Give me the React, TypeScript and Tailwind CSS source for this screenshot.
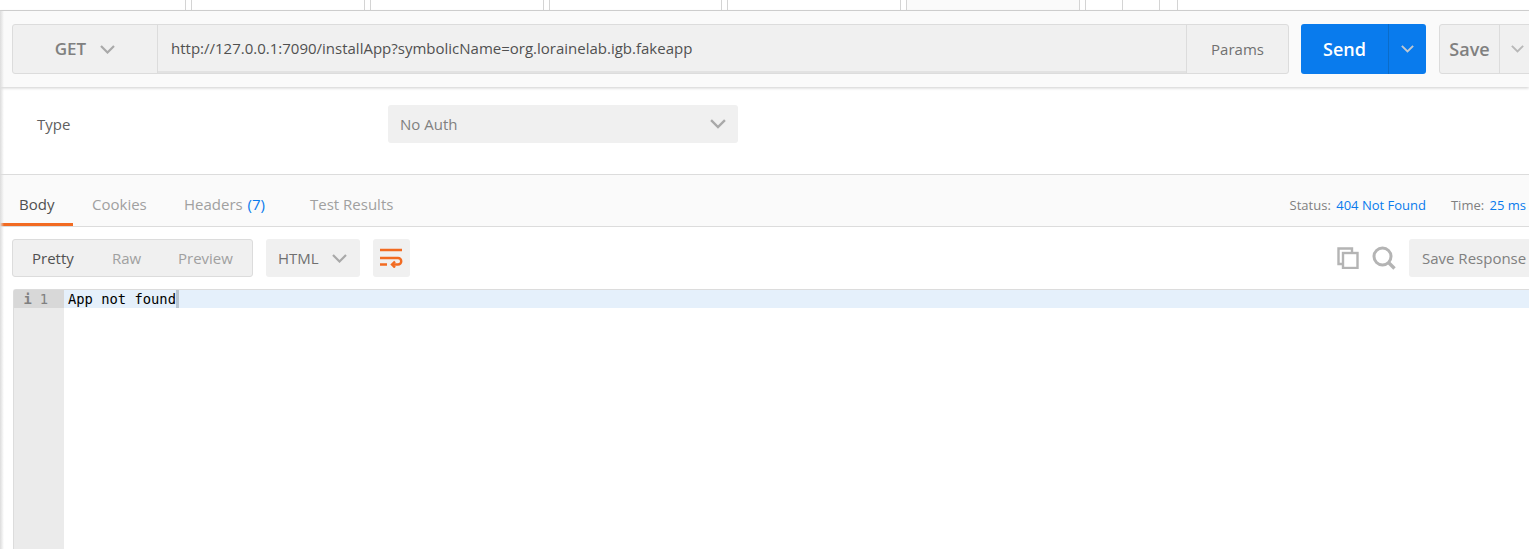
const tabWidths = ["w-[186px]", "w-[174px]", "w-[174px]", "w-[173px]", "w-[174px]"];

function Chevron({ className, width = 15 }: { className: string; width?: number }) {
  return (
    <svg width={width} height={width * 0.6} viewBox="0 0 15 9" fill="none" stroke="currentColor" strokeWidth="2.2" className={className}>
      <path d="M1 1l6.5 6.5L14 1" />
    </svg>
  );
}

function WrapIcon() {
  return (
    <svg width="23" height="20" viewBox="0 0 23 20" fill="none" stroke="#f26b22" strokeWidth="2.4" className="-ml-[1px]">
      <path d="M0 2h22M0 10h18a3.2 3.2 0 0 1 0 6.5H12M0 16.5h7" />
      <path d="M15 13.5l-3 3 3 3" />
    </svg>
  );
}

function CopyIcon() {
  return (
    <svg width="22" height="22" viewBox="0 0 22 22" fill="none" stroke="#b4b4b4" strokeWidth="2.4">
      <path d="M5 17H1.5V1.5H15V5" />
      <rect x="6" y="6" width="14.5" height="15" />
    </svg>
  );
}

function SearchIcon() {
  return (
    <svg width="24" height="24" viewBox="0 0 24 24" fill="none" stroke="#b4b4b4">
      <circle cx="10.5" cy="10.5" r="8.5" strokeWidth="3" />
      <path d="M16.5 16.5l6 6" strokeWidth="3.4" />
    </svg>
  );
}

export default function App() {
  return (
    <div className="relative h-[549px] w-[1529px] overflow-hidden bg-white font-['Open_Sans',sans-serif] text-[15px] text-[#505050]">
      <div className="flex h-[11px] gap-[5px] overflow-hidden border-b border-[#d4d4d4]">
        {tabWidths.map((w, i) => (
          <div key={i} className={`${w} border-r border-[#d4d4d4] ${i === 0 ? "" : "border-l"}`} />
        ))}
        <div className="w-[174px] border-x border-[#d4d4d4] bg-[#fafafa]" />
        <div className="flex w-[93px] border-x border-[#d4d4d4]">
          <div className="w-[37px] border-r border-[#d4d4d4]" />
          <div className="w-[37px] border-r border-[#d4d4d4]" />
        </div>
      </div>

      <div className="relative flex h-[76px] gap-[12px] overflow-hidden bg-[#fafafa] pl-[12px] pt-[13px] shadow-[0_1px_3px_rgba(0,0,0,0.2)]">
        <div className="flex h-[50px] w-[1277px] shrink-0 overflow-hidden rounded-[3px] border border-[#dcdcdc] bg-[#f0f0f0]">
          <div className="flex w-[145px] items-center justify-center gap-[14px] border-r border-[#dcdcdc] text-[17px] font-semibold text-[#808080]">
            GET <Chevron className="text-[#a9a9a9]" />
          </div>
          <div className="flex flex-1 items-center border-b-2 border-[#e2e2e2] pl-[13px] text-[#505050]">
            http://127.0.0.1:7090/installApp?symbolicName=org.lorainelab.igb.fakeapp
          </div>
          <div className="flex w-[102px] items-center justify-center border-l border-[#dcdcdc] text-[#707070]">Params</div>
        </div>
        <div className="flex h-[50px] w-[125px] shrink-0 overflow-hidden rounded-[3px] bg-[#097bed] text-white">
          <div className="flex w-[87px] items-center justify-center text-[18px] font-semibold">Send</div>
          <div className="flex flex-1 items-center justify-center border-l border-[#0a6cc9]">
            <Chevron width={13} className="text-[#c0c8d0]" />
          </div>
        </div>
        <div className="ml-[1px] flex h-[50px] w-[100px] shrink-0 rounded-[3px] border border-[#dcdcdc] bg-[#f0f0f0]">
          <div className="flex w-[60px] items-center justify-center border-r border-[#dcdcdc] text-[18px] font-semibold text-[#808080]">Save</div>
          <div className="flex items-center pl-[11px]">
            <Chevron width={13} className="text-[#b8b8b8]" />
          </div>
        </div>
      </div>

      <div className="flex h-[87px] items-start pl-[37px] pt-[18px]">
        <div className="w-[351px] pt-[8px] text-[#606060]">Type</div>
        <div className="flex h-[38px] w-[350px] items-center justify-between rounded-[3px] bg-[#f0f0f0] px-[12px] text-[#808080]">
          No Auth <Chevron width={16} className="text-[#a9a9a9]" />
        </div>
      </div>

      <div className="flex h-[53px] items-end justify-between border-y border-[#dcdcdc] bg-[#fafafa]">
        <div className="flex items-end text-[#a0a0a0]">
          <div className="h-[33px] w-[73px] border-b-[3px] border-[#f26b22] pl-[19px] text-[#505050]">Body</div>
          <div className="h-[33px] w-[92px] pl-[19px]">Cookies</div>
          <div className="h-[33px] w-[126px] pl-[19px]">
            Headers <span className="ml-[1px] text-[#097bed]">(7)</span>
          </div>
          <div className="h-[33px] pl-[19px]">Test Results</div>
        </div>
        <div className="flex h-[33px] gap-[25px] pr-[3px] text-[13px] leading-[24px] text-[#808080]">
          <div>
            Status: <span className="ml-[2px] text-[#097bed]">404 Not Found</span>
          </div>
          <div>
            Time: <span className="ml-[2px] text-[#097bed]">25 ms</span>
          </div>
        </div>
      </div>

      <div className="flex h-[62px] items-start justify-between pl-[12px] pt-[12px]">
        <div className="flex gap-[13px]">
          <div className="flex h-[38px] w-[241px] items-center rounded-[3px] border border-[#dcdcdc] bg-[#f0f0f0] pl-[19px] text-[#a0a0a0]">
            <span className="w-[80px] text-[#505050]">Pretty</span>
            <span className="w-[66px]">Raw</span>
            <span>Preview</span>
          </div>
          <div className="flex h-[38px] w-[94px] items-center justify-between rounded-[3px] bg-[#f0f0f0] pl-[12px] pr-[13px] text-[#707070]">
            HTML <Chevron className="text-[#a9a9a9]" />
          </div>
          <div className="flex h-[38px] w-[37px] items-center justify-center rounded-[3px] bg-[#f0f0f0]">
            <WrapIcon />
          </div>
        </div>
        <div className="flex items-center gap-[13px]">
          <CopyIcon />
          <SearchIcon />
          <div className="flex h-[38px] w-[120px] items-center whitespace-nowrap rounded-l-[3px] bg-[#f0f0f0] pl-[13px] text-[#808080]">
            Save Response
          </div>
        </div>
      </div>

      <div className="ml-[13px] flex h-[260px] rounded-tl-[3px] border-l border-t border-[#dcdcdc] font-['DejaVu_Sans_Mono',monospace] text-[13.8px]">
        <div className="w-[50px] bg-[#ebebeb]">
          <div className="flex h-[18px] items-center justify-end gap-[8px] bg-[#d8d8d8] pr-[16px] text-[#808080]">
            <span className="font-bold">i</span>
            <span>1</span>
          </div>
        </div>
        <div className="flex-1">
          <div className="flex h-[18px] items-center bg-[#e5f0fb] pl-[4px] text-black">
            <span className="border-r-[3px] border-[#b8c4d0] leading-[18px]">App not found</span>
          </div>
        </div>
      </div>

      <div className="pointer-events-none absolute bottom-0 left-0 top-[11px] w-[4px] bg-gradient-to-r from-[#dcdcdc] to-transparent" />
    </div>
  );
}
